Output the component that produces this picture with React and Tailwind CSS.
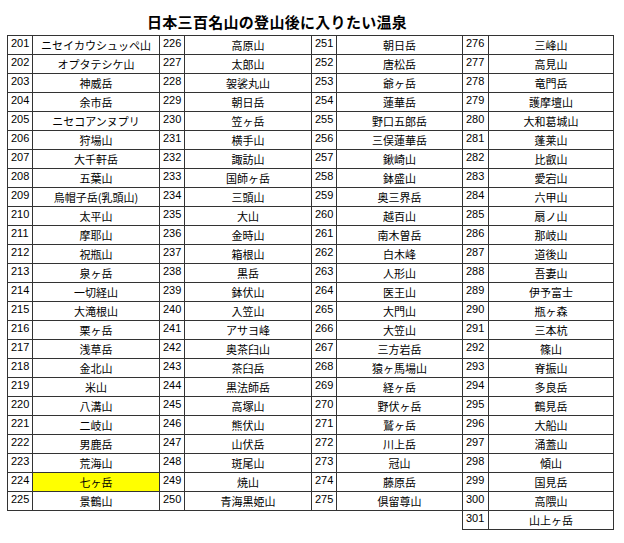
const groups = [
  [
    'ニセイカウシュッペ山', 'オプタテシケ山', '神威岳', '余市岳', 'ニセコアンヌプリ', '狩場山', '大千軒岳', '五葉山',
    '烏帽子岳(乳頭山)', '太平山', '摩耶山', '祝瓶山', '泉ヶ岳', '一切経山', '大滝根山', '栗ヶ岳', '浅草岳', '金北山',
    '米山', '八溝山', '二岐山', '男鹿岳', '荒海山', '七ヶ岳', '景鶴山',
  ],
  [
    '高原山', '太郎山', '袈裟丸山', '朝日岳', '笠ヶ岳', '横手山', '諏訪山', '国師ヶ岳', '三頭山', '大山', '金時山',
    '箱根山', '黒岳', '鉢伏山', '入笠山', 'アサヨ峰', '奥茶臼山', '茶臼岳', '黒法師岳', '高塚山', '熊伏山', '山伏岳',
    '斑尾山', '焼山', '青海黒姫山',
  ],
  [
    '朝日岳', '唐松岳', '爺ヶ岳', '蓮華岳', '野口五郎岳', '三俣蓮華岳', '鍬崎山', '鉢盛山', '奥三界岳', '越百山',
    '南木曽岳', '白木峰', '人形山', '医王山', '大門山', '大笠山', '三方岩岳', '猿ヶ馬場山', '経ヶ岳', '野伏ヶ岳',
    '鷲ヶ岳', '川上岳', '冠山', '藤原岳', '倶留尊山',
  ],
  [
    '三峰山', '高見山', '竜門岳', '護摩壇山', '大和葛城山', '蓬莱山', '比叡山', '愛宕山', '六甲山', '扇ノ山', '那岐山',
    '道後山', '吾妻山', '伊予富士', '瓶ヶ森', '三本杭', '篠山', '脊振山', '多良岳', '鶴見岳', '大船山', '涌蓋山',
    '傾山', '国見岳', '高隈山', '山上ヶ岳',
  ],
];

const starts = [201, 226, 251, 276];

function NumCell({ n }) {
  return (
    <td className="h-[19px] border border-[#333] pl-[3px] align-top text-left text-[11px] leading-[15px] [font-family:'Liberation_Sans',sans-serif]">
      {n}
    </td>
  );
}

function NameCell({ name, highlight }) {
  return (
    <td
      className={`h-[19px] border border-[#333] text-center align-middle text-[11px] leading-[18px] ${
        highlight ? 'bg-[#ffff00]' : ''
      }`}
    >
      {name}
    </td>
  );
}

export default function App() {
  const rows = [];
  for (let i = 0; i < 26; i++) rows.push(i);

  return (
    <div className="w-[624px] h-[543px] bg-white text-black [font-family:'Noto_Sans_CJK_JP','Noto_Sans',sans-serif]">
      <div className="pt-[13px] mb-[4px] pl-[147px] text-[15px] leading-[18px] font-bold tracking-[0.3px]">
        日本三百名山の登山後に入りたい温泉
      </div>
      <table className="ml-[7px] border-collapse table-fixed w-[606px]">
        <colgroup>
          <col className="w-[25px]" />
          <col className="w-[127px]" />
          <col className="w-[25px]" />
          <col className="w-[127px]" />
          <col className="w-[25px]" />
          <col className="w-[126px]" />
          <col className="w-[26px]" />
          <col className="w-[125px]" />
        </colgroup>
        <tbody>
          {rows.map((i) => (
            <tr key={i}>
              {groups.map((g, gi) =>
                i < g.length ? (
                  [
                    <NumCell key={`n${gi}`} n={starts[gi] + i} />,
                    <NameCell key={`m${gi}`} name={g[i]} highlight={starts[gi] + i === 224} />,
                  ]
                ) : (
                  [<td key={`n${gi}`} className="h-[19px]" />, <td key={`m${gi}`} className="h-[19px]" />]
                )
              )}
            </tr>
          ))}
        </tbody>
      </table>
    </div>
  );
}
